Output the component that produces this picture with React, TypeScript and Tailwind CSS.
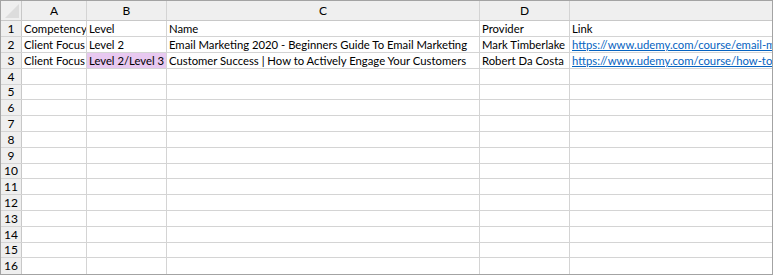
import React from 'react';

const columns = [
  { key: 'A', width: 65 },
  { key: 'B', width: 80 },
  { key: 'C', width: 313 },
  { key: 'D', width: 90 },
  { key: 'E', width: 202, label: '' },
];

type Cell = { text: string; link?: boolean; highlight?: boolean };

const data: Cell[][] = [
  [{ text: 'Competency' }, { text: 'Level' }, { text: 'Name' }, { text: 'Provider' }, { text: 'Link' }],
  [
    { text: 'Client Focus' },
    { text: 'Level 2' },
    { text: 'Email Marketing 2020 - Beginners Guide To Email Marketing' },
    { text: 'Mark Timberlake' },
    { text: 'https://www.udemy.com/course/email-marketing-2020/', link: true },
  ],
  [
    { text: 'Client Focus' },
    { text: 'Level 2/Level 3', highlight: true },
    { text: 'Customer Success | How to Actively Engage Your Customers' },
    { text: 'Robert Da Costa' },
    { text: 'https://www.udemy.com/course/how-to-actively-engage-your-customers/', link: true },
  ],
];

// slightly uneven rows, the screenshot was scaled down
const rowHeights = [16, 16, 16, 16, 15, 16, 16, 16, 16, 15, 16, 16, 16, 16, 15, 16];

export default function App() {
  return (
    <div
      className="w-[774px] h-[276px] bg-white overflow-hidden text-[11.3px] text-black"
      style={{ fontFamily: 'Lato, "Liberation Sans", sans-serif' }}
    >
      <div className="w-[773px] h-[275px] border border-[#a3a3a3] overflow-hidden">
        {/* column headers */}
        <div className="flex h-[20px] bg-[#efefef] border-b border-[#c8c8c8] text-[12px]">
          <div className="w-[21px] shrink-0 border-r border-[#c8c8c8] relative">
            <svg className="absolute right-[2px] bottom-[2px]" width="14" height="14" viewBox="0 0 14 14">
              <polygon points="14,0 14,14 0,14" fill="#dcdcdc" />
            </svg>
          </div>
          {columns.map(col => (
            <div
              key={col.key}
              className="shrink-0 border-r border-[#d4d4d4] last:border-r-0 flex items-center justify-center"
              style={{ width: col.width }}
            >
              {col.label ?? col.key}
            </div>
          ))}
        </div>
        {/* rows */}
        {rowHeights.map((h, i) => {
          const row = data[i];
          return (
            <div key={i} className="flex border-b border-[#d4d4d4] last:border-b-0" style={{ height: h }}>
              <div className="w-[21px] shrink-0 bg-[#efefef] border-r border-[#c8c8c8] flex items-center justify-center leading-none text-[12px]">
                {i + 1}
              </div>
              {columns.map((col, c) => {
                const cell = row?.[c];
                return (
                  <div
                    key={col.key}
                    className={`shrink-0 border-r border-[#d4d4d4] last:border-r-0 flex items-center px-[2px] overflow-hidden whitespace-nowrap leading-none ${
                      cell?.highlight ? 'bg-[#e8c9f0]' : ''
                    }`}
                    style={{ width: col.width }}
                  >
                    {cell &&
                      (cell.link ? (
                        <span className="text-[#0563c1] underline">{cell.text}</span>
                      ) : (
                        <span>{cell.text}</span>
                      ))}
                  </div>
                );
              })}
            </div>
          );
        })}
      </div>
    </div>
  );
}
